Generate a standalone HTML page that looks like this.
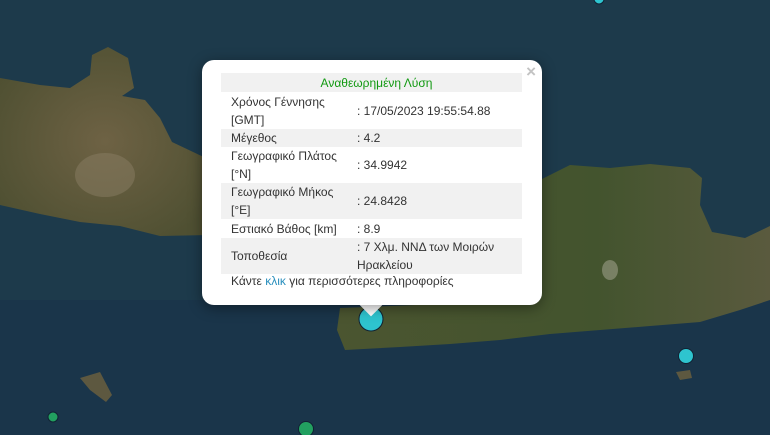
<!DOCTYPE html>
<html><head><meta charset="utf-8"><style>
*{margin:0;padding:0;box-sizing:border-box}
body{width:770px;height:435px;overflow:hidden;background:#1d3a4b;font-family:"Liberation Sans",sans-serif;position:relative}
svg.map{position:absolute;left:0;top:0}
.pop{position:absolute;left:202px;top:60px;width:340px;height:245px;background:#fff;border-radius:12px;box-shadow:0 3px 14px rgba(0,0,0,.4)}
.tip{position:absolute;left:363px;top:297px;width:16px;height:16px;background:#fff;transform:rotate(45deg)}
.x{position:absolute;right:6px;top:2px;color:#c3c3c3;font-size:17px;font-weight:bold}
table{position:absolute;left:19px;top:13px;width:301px;border-collapse:collapse;font-size:12px;color:#333;line-height:18px}
td{padding:0 0 0 10px;vertical-align:middle}
tr.g{background:#f1f1f1}
td.v{padding-left:0}
.h{text-align:center;color:#119911;height:19px}
.f{position:absolute;left:29px;top:214px;font-size:12px;color:#333}
.f span{color:#2a8fbd}
</style></head><body>
<svg class="map" width="770" height="435">
<defs><radialGradient id="ld" cx="50%" cy="50%" r="60%"><stop offset="0" stop-color="#6e6244"/><stop offset="1" stop-color="#4f5032"/></radialGradient>
<linearGradient id="le" x1="0" x2="1"><stop offset="0" stop-color="#4b5530"/><stop offset=".6" stop-color="#43542e"/><stop offset="1" stop-color="#5a5a3e"/></linearGradient></defs>
<rect width="770" height="435" fill="#1d3a4b"/>
<rect y="300" width="770" height="135" fill="#1a354a"/>
<polygon fill="url(#ld)" points="0,78 40,85 70,88 90,75 92,55 108,47 128,58 134,88 122,96 145,100 160,118 172,142 210,160 210,235 160,236 120,226 80,222 40,214 0,205"/>
<polygon fill="url(#le)" points="540,180 570,165 610,168 650,164 690,168 702,178 700,205 712,232 745,238 770,226 770,300 740,310 700,322 650,326 600,330 550,334 500,340 450,344 400,347 345,350 337,330 340,308 540,300"/>
<polygon fill="#5d5840" points="80,378 100,372 112,395 106,402 90,390"/>
<polygon fill="#5d5840" points="676,372 690,370 692,378 680,380"/>
<ellipse cx="105" cy="175" rx="30" ry="22" fill="#8a7e64" opacity=".5"/>
<ellipse cx="610" cy="270" rx="8" ry="10" fill="#c9c3b5" opacity=".4"/>
<circle cx="371" cy="319" r="12" fill="#2ec4cf" stroke="#123" stroke-width="1"/>
<circle cx="686" cy="356" r="7.5" fill="#2ec4cf" stroke="#123" stroke-width="1"/>
<circle cx="599" cy="-1" r="5" fill="#2ec4cf" stroke="#123"/>
<circle cx="306" cy="429" r="7.5" fill="#22a060" stroke="#123"/>
<circle cx="53" cy="417" r="5" fill="#22a060" stroke="#123"/>
</svg>
<div class="tip"></div>
<div class="pop"><div class="x">×</div>
<table>
<tr class="g"><td colspan="2" class="h">Αναθεωρημένη Λύση</td></tr>
<tr style="height:37px"><td style="width:136px">Χρόνος Γέννησης<br>[GMT]</td><td class="v">: 17/05/2023 19:55:54.88</td></tr>
<tr class="g" style="height:18px"><td>Μέγεθος</td><td class="v">: 4.2</td></tr>
<tr style="height:36px"><td>Γεωγραφικό Πλάτος<br>[°N]</td><td class="v">: 34.9942</td></tr>
<tr class="g" style="height:36px"><td>Γεωγραφικό Μήκος<br>[°E]</td><td class="v">: 24.8428</td></tr>
<tr style="height:19px"><td>Εστιακό Βάθος [km]</td><td class="v">: 8.9</td></tr>
<tr class="g" style="height:35px"><td>Τοποθεσία</td><td class="v">: 7 Χλμ. ΝΝΔ των Μοιρών<br>Ηρακλείου</td></tr>
</table>
<div class="f">Κάντε <span>κλικ</span> για περισσότερες πληροφορίες</div>
</div>
</body></html>
